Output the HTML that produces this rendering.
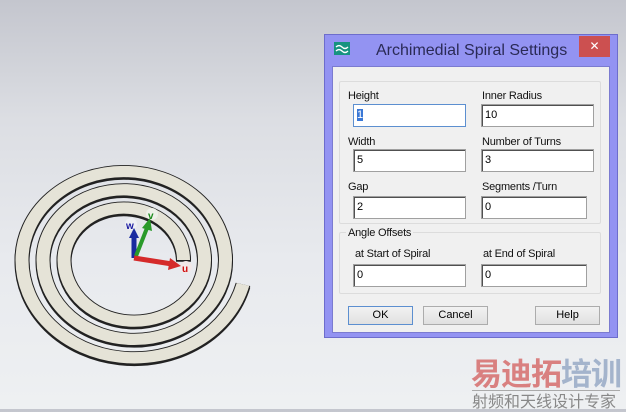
<!DOCTYPE html>
<html><head><meta charset="utf-8"><style>
*{margin:0;padding:0;box-sizing:border-box}
body{width:626px;height:409px;overflow:hidden;position:relative;font-family:"Liberation Sans",sans-serif;background:linear-gradient(#c4c6ce 0px,#dcdee3 120px,#e8eaee 260px,#eef0f2 409px)}
.abs{position:absolute}
.frame{left:324px;top:34px;width:294px;height:304px;background:#9393f2;border:1px solid #6d6dcc}
.client{left:332px;top:66px;width:278px;height:267px;background:#f0f0f0;border:1px solid #7b7bd0}
.title{left:376px;top:42px;font-size:16px;color:#2a2a55}
.close{left:579px;top:36px;width:31px;height:21px;background:#cc5050;color:#fff;font-size:12px;text-align:center;line-height:20px}
.icon{left:334px;top:42px;width:16px;height:13px;background:#17937f}
.grp{border:1px solid #dcdcdc;border-radius:2px}
.lbl{font-size:11px;color:#111;font-family:"Liberation Sans",sans-serif;letter-spacing:-0.2px}
.inp{height:23px;background:#fff;border:1px solid #a0a0a0;box-shadow:inset 1px 1px 0 #505050;font-size:11px;padding:4px 0 0 3px;color:#000}
.btn{height:19px;background:linear-gradient(#f2f2f2,#e0e0e0);border:1px solid #acacac;font-size:11px;text-align:center;line-height:17px;color:#000}
</style></head><body>
<svg class="abs" style="left:0;top:0" width="626" height="409">
<g transform="translate(129,260) scale(1,0.87)">
<path d="M54.5 0 A59.75 59.75 0 0 0 -65 0 A70.25 70.25 0 0 0 75.5 0 A80.75 80.75 0 0 0 -86 0 A91.25 91.25 0 0 0 96.5 0 A101.75 101.75 0 0 0 -107 0 A112.25 112.25 0 0 0 114 28" fill="none" stroke="#222" stroke-width="15" transform="translate(0,2)"/>
<path d="M54.5 0 A59.75 59.75 0 0 0 -65 0 A70.25 70.25 0 0 0 75.5 0 A80.75 80.75 0 0 0 -86 0 A91.25 91.25 0 0 0 96.5 0 A101.75 101.75 0 0 0 -107 0 A112.25 112.25 0 0 0 114 28" fill="none" stroke="#222" stroke-width="15"/>
<path d="M54.5 0 A59.75 59.75 0 0 0 -65 0 A70.25 70.25 0 0 0 75.5 0 A80.75 80.75 0 0 0 -86 0 A91.25 91.25 0 0 0 96.5 0 A101.75 101.75 0 0 0 -107 0 A112.25 112.25 0 0 0 114 28" fill="none" stroke="#e5e3d7" stroke-width="13"/>
</g>
<circle cx="152" cy="214" r="6" fill="#eef0e8"/><text x="148" y="219" font-size="10" font-weight="bold" fill="#1a8a1a" font-family="Liberation Sans">v</text>
<circle cx="131" cy="224" r="6" fill="#eef0f4"/><text x="126" y="229" font-size="10" font-weight="bold" fill="#1a1aa0" font-family="Liberation Sans">w</text>
<circle cx="186" cy="267" r="6" fill="#f2e8e8"/><text x="182" y="272" font-size="10" font-weight="bold" fill="#d01010" font-family="Liberation Sans">u</text>
<path d="M134 258 L134 236" stroke="#1a2aa0" stroke-width="5"/><path d="M129 238 L134 228 L139 238Z" fill="#1a2aa0"/>
<path d="M136 256 L147 228" stroke="#2a9a2a" stroke-width="4"/><path d="M142 228 L150 218 L152 231Z" fill="#2a9a2a"/>
<path d="M134 258 L172 264" stroke="#d52a2a" stroke-width="5"/><path d="M170 258 L181 266 L168 270Z" fill="#d52a2a"/>
</svg>
<div class="abs frame"></div>
<div class="abs icon"></div>
<svg class="abs" style="left:335px;top:44px" width="14" height="10"><path d="M1 3 Q4 0 7 3 T13 3 M1 7 Q4 4 7 7 T13 7" stroke="#fff" fill="none" stroke-width="1.3"/></svg>
<div class="abs title">Archimedial Spiral Settings</div>
<div class="abs close">✕</div>
<div class="abs client"></div>
<div class="abs grp" style="left:339px;top:81px;width:262px;height:143px"></div>
<div class="abs grp" style="left:339px;top:232px;width:262px;height:62px"></div>
<div class="abs lbl" style="left:348px;top:90px">Height</div>
<div class="abs lbl" style="left:482px;top:90px">Inner Radius</div>
<div class="abs inp" style="left:353px;top:104px;width:113px;border-color:#5c8fd0;box-shadow:none"><span style="background:#3a78d6;color:#fff">1</span></div>
<div class="abs inp" style="left:481px;top:104px;width:113px">10</div>
<div class="abs lbl" style="left:348px;top:136px">Width</div>
<div class="abs lbl" style="left:482px;top:136px">Number of Turns</div>
<div class="abs inp" style="left:353px;top:149px;width:113px">5</div>
<div class="abs inp" style="left:481px;top:149px;width:113px">3</div>
<div class="abs lbl" style="left:348px;top:181px">Gap</div>
<div class="abs lbl" style="left:482px;top:181px">Segments /Turn</div>
<div class="abs inp" style="left:353px;top:196px;width:113px">2</div>
<div class="abs inp" style="left:481px;top:196px;width:106px">0</div>
<div class="abs lbl" style="left:346px;top:227px;background:#f0f0f0;padding:0 2px">Angle Offsets</div>
<div class="abs lbl" style="left:355px;top:248px">at Start of Spiral</div>
<div class="abs lbl" style="left:483px;top:248px">at End of Spiral</div>
<div class="abs inp" style="left:353px;top:264px;width:113px">0</div>
<div class="abs inp" style="left:481px;top:264px;width:106px">0</div>
<div class="abs btn" style="left:348px;top:306px;width:65px;border-color:#5c8fd0">OK</div>
<div class="abs btn" style="left:423px;top:306px;width:65px">Cancel</div>
<div class="abs btn" style="left:535px;top:306px;width:65px">Help</div>
<div class="abs" style="left:471px;top:354px;font-size:31px;font-weight:bold;font-family:'Noto Sans CJK SC',sans-serif;line-height:36px;white-space:nowrap;letter-spacing:-1px"><span style="color:#d98080">易迪拓</span><span style="color:#a4b4cc">培训</span></div>
<div class="abs" style="left:472px;top:390px;width:148px;border-top:1px solid #aaa"></div>
<div class="abs" style="left:472px;top:391px;font-size:16px;color:#888;font-family:'Noto Sans CJK SC',sans-serif;line-height:18px;white-space:nowrap;letter-spacing:0px">射频和天线设计专家</div>
</body></html>
